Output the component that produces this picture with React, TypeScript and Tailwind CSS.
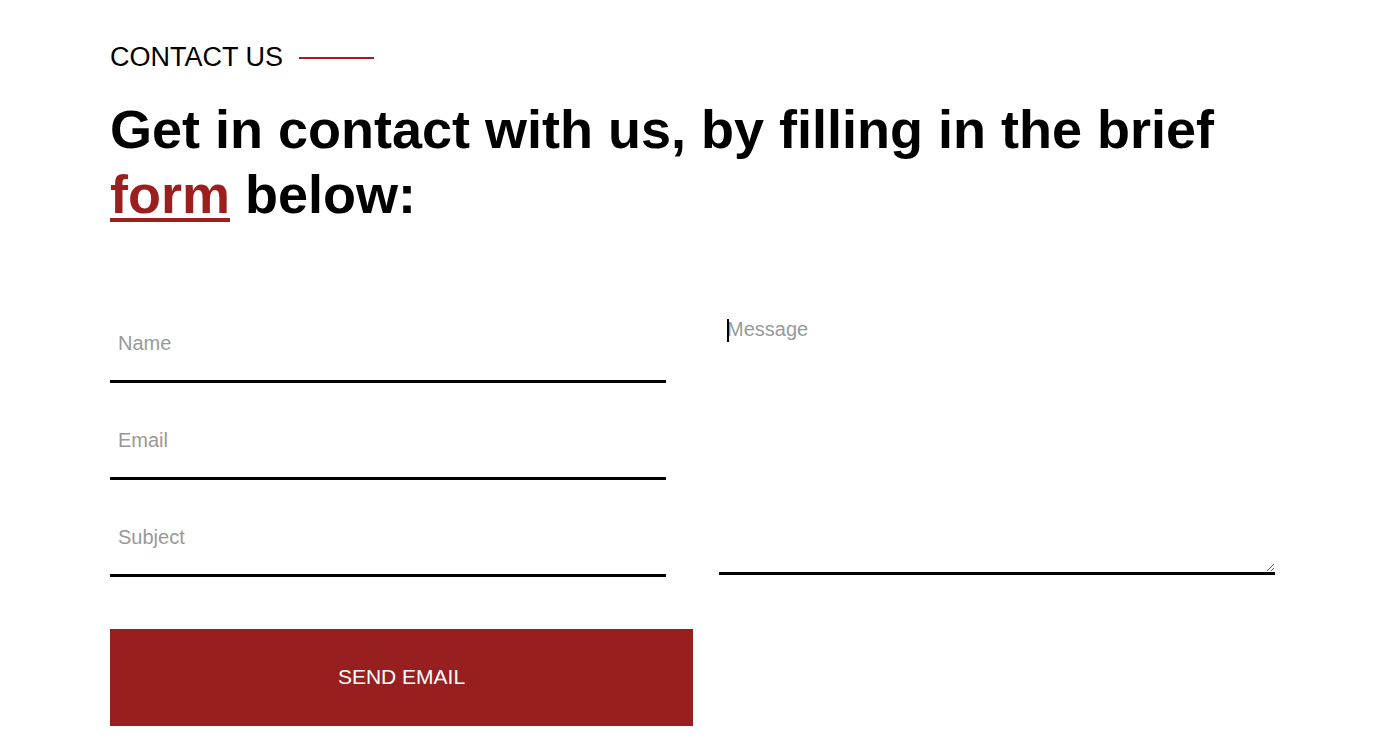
import React from "react";

export default function App() {
  return (
    <div className="min-h-screen w-full bg-white" style={{ fontFamily: '"Liberation Sans", Arial, sans-serif' }}>
      <div className="pl-[110px] pt-[42px]">
        <div className="flex items-center gap-4">
          <span className="text-[27px] leading-[1.15] text-black">CONTACT US</span>
          <span className="block h-[2px] w-[75px] bg-[#9b1f1f]"></span>
        </div>
        <h1 className="mt-[24px] text-[54px] font-bold leading-[1.2] text-black">
          Get in contact with us, by filling in the brief
          <br />
          <span className="text-[#9b1f1f] underline decoration-[4px] underline-offset-[5px]">form</span> below:
        </h1>
        <form className="mt-[84px] flex" onSubmit={(e) => e.preventDefault()}>
          <div className="flex w-[583px] flex-col">
            <div className="flex w-[556px] flex-col gap-[25px]">
              <input
                type="text"
                placeholder="Name"
                className="h-[72px] w-full border-b-[3px] border-black bg-transparent px-2 pb-1 text-[20px] text-black outline-none placeholder:text-[#999999]"
              />
              <input
                type="email"
                placeholder="Email"
                className="h-[72px] w-full border-b-[3px] border-black bg-transparent px-2 pb-1 text-[20px] text-black outline-none placeholder:text-[#999999]"
              />
              <input
                type="text"
                placeholder="Subject"
                className="h-[72px] w-full border-b-[3px] border-black bg-transparent px-2 pb-1 text-[20px] text-black outline-none placeholder:text-[#999999]"
              />
            </div>
            <button
              type="submit"
              className="mt-[52px] h-[97px] w-full bg-[#981f1f] text-[21px] text-white"
            >
              SEND EMAIL
            </button>
          </div>
          <div className="relative ml-[26px] w-[556px]">
            <textarea
              autoFocus
              placeholder="Message"
              className="peer block h-[264px] w-full resize-y border-b-[3px] border-black bg-transparent px-2 pt-[3px] pb-2 text-[20px] text-black caret-black outline-none placeholder:text-[#999999]"
            ></textarea>
            <span className="pointer-events-none absolute left-[8px] top-[8px] h-[23px] w-[2px] bg-black peer-[:not(:placeholder-shown)]:hidden"></span>
          </div>
        </form>
      </div>
    </div>
  );
}
